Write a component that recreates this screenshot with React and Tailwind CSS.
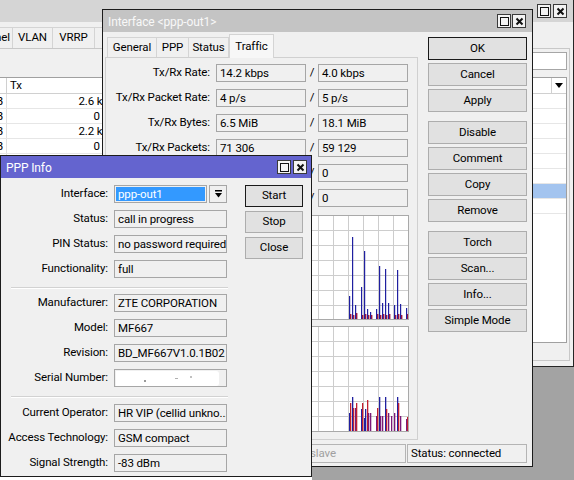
import React from "react";

function TBtn({ kind }) {
  return (
    <div className="w-[14px] h-[14px] border border-[#3a3a3a] bg-[#f3f3f3] flex items-center justify-center">
      {kind === "max" ? (
        <svg width="9" height="9" viewBox="0 0 9 9">
          <rect x="0.5" y="0.5" width="8" height="8" fill="none" stroke="#111" strokeWidth="1" />
        </svg>
      ) : (
        <svg width="9" height="9" viewBox="0 0 9 9">
          <path d="M1.5 1.5L7.5 7.5M7.5 1.5L1.5 7.5" stroke="#111" strokeWidth="2" />
        </svg>
      )}
    </div>
  );
}

function Field({ children, className = "" }) {
  return (
    <div className={`h-[18px] border border-[#a6a6a6] bg-[#f0f0f0] pl-[3px] leading-[16px] whitespace-nowrap overflow-hidden ${className}`}>
      {children}
    </div>
  );
}

function Btn({ children, def = false, className = "" }) {
  return (
    <div
      className={`border ${def ? "border-[#1a1a1a]" : "border-[#adadad]"} bg-[#e1e1e1] flex items-center justify-center ${className}`}
    >
      {children}
    </div>
  );
}

function Graph({ top, h, children }) {
  const left = 110;
  const w = 299;
  const vx = [];
  for (let x = 123; x < left + w; x += 15) vx.push(x);
  const hy = [];
  for (let y = top + 15; y < top + h; y += 15) hy.push(y);
  return (
    <svg width={w} height={h} viewBox={`${left} ${top} ${w} ${h}`} className="block">
      <rect x={left} y={top} width={w} height={h} fill="#fff" />
      {vx.map((x) => (
        <line key={"v" + x} x1={x + 0.5} x2={x + 0.5} y1={top} y2={top + h} stroke="#cdcdcd" />
      ))}
      {hy.map((y) => (
        <line key={"h" + y} x1={left} x2={left + w} y1={y + 0.5} y2={y + 0.5} stroke="#cdcdcd" />
      ))}
      {children}
      <rect x={left + 0.5} y={top + 0.5} width={w - 1} height={h - 1} fill="none" stroke="#a9a9a9" />
    </svg>
  );
}

const g1Blue = [
  [349, 296], [352, 237], [355, 305], [361, 287], [364, 251], [367, 309], [370, 312],
  [376, 309], [379, 266], [382, 303], [385, 269], [388, 303], [394, 305], [397, 270],
  [400, 304], [406, 308],
];
const g1Red = [
  [350, 314], [353, 315], [356, 313], [362, 315], [365, 314], [368, 315], [371, 315],
  [377, 314], [380, 315], [383, 314], [386, 315], [389, 314], [395, 315], [398, 314],
  [401, 315], [407, 314],
];
const C = { b: "#2020a0", r: "#c02030", p: "#7a1a78" };
const g2 = [
  [349, "b", 413], [350, "r", 403], [352, "b", 397], [353, "r", 408], [355, "p", 408], [356, "r", 403],
  [361, "b", 409], [362, "r", 403], [364, "b", 418], [365, "b", 409], [367, "r", 400], [368, "p", 413],
  [370, "p", 413], [376, "p", 416], [377, "r", 408], [379, "b", 397], [380, "p", 416], [382, "p", 416],
  [385, "b", 397], [386, "r", 409], [388, "p", 413], [391, "p", 416], [394, "p", 413], [397, "b", 397],
  [398, "r", 403], [400, "p", 416], [406, "p", 419], [407, "r", 417],
];

function BackWindow() {
  const rows = ["2.6 kbps", "0 bps", "2.2 kbps", "0 bps", "", "", "", ""];
  return (
    <div className="absolute left-0 top-0 w-[574px] h-[367px] bg-[#f0f0f0] border-r border-b border-[#262626] flex flex-col">
      <div className="h-[22px] shrink-0 bg-[#d5d5d5] flex justify-end items-start pt-[4px] pr-[6px] gap-[2px]">
        <TBtn kind="max" />
        <TBtn kind="close" />
      </div>
      <div className="mt-[5px] h-[21px] shrink-0 flex items-stretch">
        <div className="w-[13px] border-r border-t border-[#d4d4d4] flex justify-end items-center pr-[2px] overflow-hidden whitespace-nowrap">
          nel
        </div>
        <div className="w-[40px] border-r border-t border-[#d4d4d4] flex justify-center items-center">VLAN</div>
        <div className="w-[42px] border-r border-t border-[#d4d4d4] flex justify-center items-center">VRRP</div>
        <div className="w-[60px] border-r border-t border-[#d4d4d4] flex justify-center items-center">Bonding</div>
      </div>
      <div className="h-[313px] mr-[3px] border border-l-0 border-[#c8c8c8] flex flex-col">
        <div className="h-[28px] shrink-0 flex justify-end items-start pt-[3px] pr-[2px]">
          <div className="w-[140px] h-[18px] border border-[#a6a6a6] bg-white" />
        </div>
        <div className="h-[266px] mr-[2px] bg-white border border-l-0 border-[#a0a0a0] flex flex-col">
          <div className="h-[16px] shrink-0 flex border-b border-[#d0d0d0]">
            <div className="w-[7px] border-r border-[#d0d0d0]" />
            <div className="w-[118px] border-r border-[#d0d0d0] pl-[3px] leading-[15px]">Tx</div>
            <div className="flex-1" />
            <div className="w-[15px] border-l border-[#d0d0d0] flex items-center justify-center">
              <svg width="8" height="5" viewBox="0 0 8 5">
                <path d="M0 0H8L4 5Z" fill="#000" />
              </svg>
            </div>
          </div>
          {rows.map((v, i) => (
            <div
              key={i}
              className={`h-[15px] shrink-0 flex border-b border-[#e6e6e6] ${i === 6 ? "bg-[#a3c4ef]" : ""}`}
            >
              <div className="w-[7px] border-r border-[#e0e0e0] flex justify-end pr-[3px] overflow-hidden leading-[14px]">
                {i < 4 ? "B" : ""}
              </div>
              <div className="w-[118px] flex justify-end pr-[4px] leading-[14px] whitespace-nowrap">{v}</div>
            </div>
          ))}
        </div>
      </div>
    </div>
  );
}

function IfRow({ label, a, b }) {
  return (
    <div className="flex items-center h-[18px]">
      <div className="w-[104px] text-right whitespace-nowrap">{label}</div>
      <div className="w-[6px]" />
      <Field className="w-[90px]">{a}</Field>
      <div className="w-[12px] text-center">/</div>
      <Field className="w-[90px]">{b}</Field>
    </div>
  );
}

function InterfaceWindow() {
  return (
    <div className="absolute left-[102px] top-[9px] w-[431px] h-[458px] bg-[#f0f0f0] border border-[#1c1c1c] flex flex-col">
      <div className="h-[22px] shrink-0 bg-[#c4c4c4] flex items-start justify-between">
        <span className="pl-[5px] pt-[4px] leading-[16px] text-[12px] text-[#f8f8f8]">Interface &lt;ppp-out1&gt;</span>
        <div className="flex gap-[1px] pt-[4px] pr-[6px]">
          <TBtn kind="max" />
          <TBtn kind="close" />
        </div>
      </div>
      <div className="flex h-[408px] shrink-0 pl-[2px]">
        <div className="flex flex-col w-[313px]">
          <div className="h-[25px] flex items-end pl-[2px]">
            <div className="w-[50px] h-[20px] border border-b-0 border-[#d4d4d4] flex items-center justify-center">General</div>
            <div className="w-[32px] h-[20px] border border-b-0 border-l-0 border-[#d4d4d4] flex items-center justify-center">PPP</div>
            <div className="w-[40px] h-[20px] border border-b-0 border-l-0 border-[#d4d4d4] flex items-center justify-center">Status</div>
            <div className="w-[45px] h-[24px] border border-b-0 border-[#d4d4d4] bg-[#f7f7f7] flex items-start pt-[3px] justify-center -mb-px relative">Traffic</div>
          </div>
          <div className="h-[383px] border border-[#d0d0d0] flex flex-col pt-[6px] gap-[7px]">
            <IfRow label="Tx/Rx Rate:" a="14.2 kbps" b="4.0 kbps" />
            <IfRow label="Tx/Rx Packet Rate:" a="4 p/s" b="5 p/s" />
            <IfRow label="Tx/Rx Bytes:" a="6.5 MiB" b="18.1 MiB" />
            <IfRow label="Tx/Rx Packets:" a="71 306" b="59 129" />
            <IfRow label="Tx/Rx Drops:" a="0" b="0" />
            <IfRow label="Tx/Rx Errors:" a="0" b="0" />
            <div className="ml-[4px] mt-[1px] flex flex-col gap-[6px]">
              <Graph top={215} h={105}>
                {g1Blue.map(([x, t]) => (
                  <rect key={"b" + x} x={x} y={t} width="1.2" height={319 - t} fill={C.b} />
                ))}
                {g1Red.map(([x, t]) => (
                  <rect key={"r" + x} x={x} y={t} width="1.4" height={319 - t} fill="#9a1840" />
                ))}
              </Graph>
              <Graph top={326} h={106}>
                {g2.map(([x, c, t], i) => (
                  <rect key={i} x={x} y={t} width="1.3" height={431 - t} fill={C[c]} />
                ))}
              </Graph>
            </div>
          </div>
        </div>
        <div className="ml-[10px] w-[99px] pt-[5px] flex flex-col gap-[3px]">
          <Btn def className="h-[23px]">OK</Btn>
          <Btn className="h-[23px]">Cancel</Btn>
          <Btn className="h-[23px]">Apply</Btn>
          <Btn className="h-[23px] mt-[6px]">Disable</Btn>
          <Btn className="h-[23px]">Comment</Btn>
          <Btn className="h-[23px]">Copy</Btn>
          <Btn className="h-[23px]">Remove</Btn>
          <Btn className="h-[23px] mt-[6px]">Torch</Btn>
          <Btn className="h-[23px]">Scan...</Btn>
          <Btn className="h-[23px]">Info...</Btn>
          <Btn className="h-[23px]">Simple Mode</Btn>
        </div>
      </div>
      <div className="mt-[4px] h-[19px] shrink-0 flex pl-[2px]">
        <div className="w-[100px] border border-[#b4b4b4] pl-[3px] leading-[17px] text-[#a0a0a0]">enabled</div>
        <div className="w-[100px] ml-[1px] border border-[#b4b4b4] pl-[3px] leading-[17px] text-[#a0a0a0]">running</div>
        <div className="w-[100px] border border-[#b4b4b4] pl-[3px] leading-[17px] text-[#a0a0a0]">slave</div>
        <div className="w-[120px] ml-[1px] border border-[#b4b4b4] pl-[3px] leading-[17px]">Status: connected</div>
      </div>
    </div>
  );
}

function PRow({ label, children }) {
  return (
    <div className="flex items-center h-[18px]">
      <div className="w-[107px] text-right whitespace-nowrap">{label}</div>
      <div className="w-[6px]" />
      {children}
    </div>
  );
}

function Sep() {
  return <div className="ml-[10px] w-[217px] h-[2px] border-t border-[#d2d2d2] border-b border-b-white" />;
}

function PPPWindow() {
  return (
    <div className="absolute left-0 top-[155px] w-[312px] h-[322px] bg-[#f0f0f0] border border-[#1c1c1c] flex flex-col">
      <div className="h-[22px] shrink-0 bg-[#6464cf] flex items-start justify-between">
        <span className="pl-[5px] pt-[4px] leading-[16px] text-[12px] text-white">PPP Info</span>
        <div className="flex gap-[2px] pt-[4px] pr-[4px]">
          <TBtn kind="max" />
          <TBtn kind="close" />
        </div>
      </div>
      <div className="flex pt-[7px]">
        <div className="flex flex-col">
          <div className="flex flex-col gap-[7px]">
            <PRow label="Interface:">
              <div className="w-[93px] h-[18px] border border-[#a6a6a6] bg-[#f0f0f0] p-[1px]">
                <div className="h-full bg-[#3399ff] text-white pl-[2px] leading-[15px]">ppp-out1</div>
              </div>
              <div className="ml-[2px] w-[18px] h-[18px] border border-[#a6a6a6] bg-[#f0f0f0] flex items-center justify-center">
                <svg width="7" height="8" viewBox="0 0 7 8">
                  <rect x="0" y="0" width="7" height="1.5" fill="#000" />
                  <path d="M0 3H7L3.5 7.5Z" fill="#000" />
                </svg>
              </div>
            </PRow>
            <PRow label="Status:"><Field className="w-[113px]">call in progress</Field></PRow>
            <PRow label="PIN Status:"><Field className="w-[113px]">no password required</Field></PRow>
            <PRow label="Functionality:"><Field className="w-[113px]">full</Field></PRow>
          </div>
          <div className="mt-[9px] mb-[5px]"><Sep /></div>
          <div className="flex flex-col gap-[7px]">
            <PRow label="Manufacturer:"><Field className="w-[113px]">ZTE CORPORATION</Field></PRow>
            <PRow label="Model:"><Field className="w-[113px]">MF667</Field></PRow>
            <PRow label="Revision:"><Field className="w-[113px]">BD_MF667V1.0.1B02</Field></PRow>
            <PRow label="Serial Number:">
              <Field className="w-[113px] relative">
                <div className="absolute left-[1px] top-[1px] w-[103px] h-[15px] bg-white rounded-r-[3px]" />
                <div className="absolute left-[29px] top-[10px] w-[2px] h-[2px] bg-[#9a9a9a]" />
                <div className="absolute left-[60px] top-[8px] w-[3px] h-[1px] bg-[#b0b0b0]" />
                <div className="absolute left-[75px] top-[6px] w-[2px] h-[2px] bg-[#c0c0c0]" />
              </Field>
            </PRow>
          </div>
          <div className="mt-[9px] mb-[6px]"><Sep /></div>
          <div className="flex flex-col gap-[7px]">
            <PRow label="Current Operator:"><Field className="w-[113px]">HR VIP (cellid unkno...</Field></PRow>
            <PRow label="Access Technology:"><Field className="w-[113px]">GSM compact</Field></PRow>
            <PRow label="Signal Strength:"><Field className="w-[113px]">-83 dBm</Field></PRow>
          </div>
        </div>
        <div className="ml-[17px] w-[58px] flex flex-col gap-[4px]">
          <Btn def className="h-[22px]">Start</Btn>
          <Btn className="h-[22px]">Stop</Btn>
          <Btn className="h-[22px]">Close</Btn>
        </div>
      </div>
    </div>
  );
}

export default function App() {
  return (
    <div className="relative w-[574px] h-[480px] overflow-hidden bg-[#a3a3a3] text-black text-[11.5px] tracking-[-0.12px] font-['Roboto','Liberation_Sans',sans-serif]">
      <BackWindow />
      <InterfaceWindow />
      <PPPWindow />
      <div className="absolute left-0 top-[477px] w-[312px] h-[3px] bg-white" />
    </div>
  );
}
